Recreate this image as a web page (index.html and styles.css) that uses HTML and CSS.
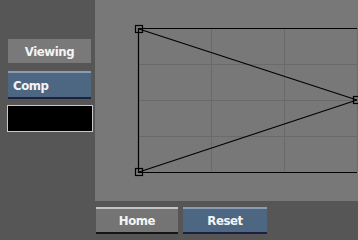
FILE: index.html
```html
<!DOCTYPE html>
<html lang="en">
<head>
<meta charset="UTF-8">
<title>Viewing</title>
<link rel="stylesheet" href="styles.css">
</head>
<body>

<div class="app">
    <div class="sidebar">
        <div class="label">Viewing</div>
        <button class="btn blue left">Comp</button>
        <div class="swatch"></div>
    </div>

    <div class="main">
        <div class="canvas">
            <svg width="263" height="201" viewBox="0 0 263 201">
                <g stroke="#6a6a6a" stroke-width="1">
                    <line x1="116.5" y1="28" x2="116.5" y2="172"/>
                    <line x1="189.5" y1="28" x2="189.5" y2="172"/>
                    <line x1="262.5" y1="28" x2="262.5" y2="172"/>
                    <line x1="43" y1="64.5" x2="262" y2="64.5"/>
                    <line x1="43" y1="100.5" x2="262" y2="100.5"/>
                    <line x1="43" y1="136.5" x2="262" y2="136.5"/>
                </g>
                <g stroke="#000" stroke-width="1.2" fill="none">
                    <polyline points="262,28.5 43.5,28.5 43.5,172.5 262,172.5"/>
                    <line x1="44" y1="29" x2="262" y2="100"/>
                    <line x1="44" y1="172" x2="262" y2="100"/>
                    <rect x="40.5" y="25.5" width="7" height="7"/>
                    <rect x="40.5" y="168.5" width="7" height="7"/>
                    <rect x="258.5" y="96.5" width="7" height="7"/>
                </g>
            </svg>
        </div>
        <div class="toolbar">
            <button class="btn grey home">Home</button>
            <button class="btn blue reset">Reset</button>
        </div>
    </div>
</div>

</body>
</html>
```

FILE: styles.css
```css
body {
    margin: 0;
    background-color: #565656;
    font-family: "DejaVu Sans Condensed", "DejaVu Sans", sans-serif;
    font-weight: bold;
    font-size: 13px;
    letter-spacing: -0.4px;
    color: #f4f4f4;
    overflow: hidden;
}

.app {
    display: flex;
    width: 358px;
    height: 240px;
}

.sidebar {
    width: 87px;
    padding: 39px 0 0 8px;
    display: flex;
    flex-direction: column;
    align-items: flex-start;
}

.label {
    width: 83px;
    height: 24px;
    background-color: #797979;
    display: flex;
    align-items: center;
    justify-content: center;
}

.btn {
    font-family: inherit;
    font-weight: bold;
    font-size: 13px;
    letter-spacing: -0.4px;
    color: #f4f4f4;
    height: 27px;
    padding: 0;
    margin: 0;
    border: 0;
    border-top: 2px solid #8a9cb2;
    border-bottom: 2px solid #1c2140;
    box-sizing: border-box;
    cursor: pointer;
}

.blue {
    background-color: #4d6783;
}

.grey {
    background-color: #747474;
    border-top-color: #c4c4c4;
    border-bottom-color: #151515;
}

.left {
    width: 83px;
    height: 28px;
    margin-top: 8px;
    text-align: left;
    padding-left: 5px;
}

.swatch {
    width: 84px;
    height: 25px;
    margin: 6px 0 0 -1px;
    background-color: #000;
    border: 1px solid #c8c8c8;
}

.main {
    flex: 1;
    display: flex;
    flex-direction: column;
}

.canvas {
    height: 201px;
    background-color: #787878;
    overflow: hidden;
}

.canvas svg {
    display: block;
}

.toolbar {
    display: flex;
    gap: 5px;
    padding: 6px 0 0 1px;
}

.home {
    width: 82px;
}

.reset {
    width: 84px;
}
```
